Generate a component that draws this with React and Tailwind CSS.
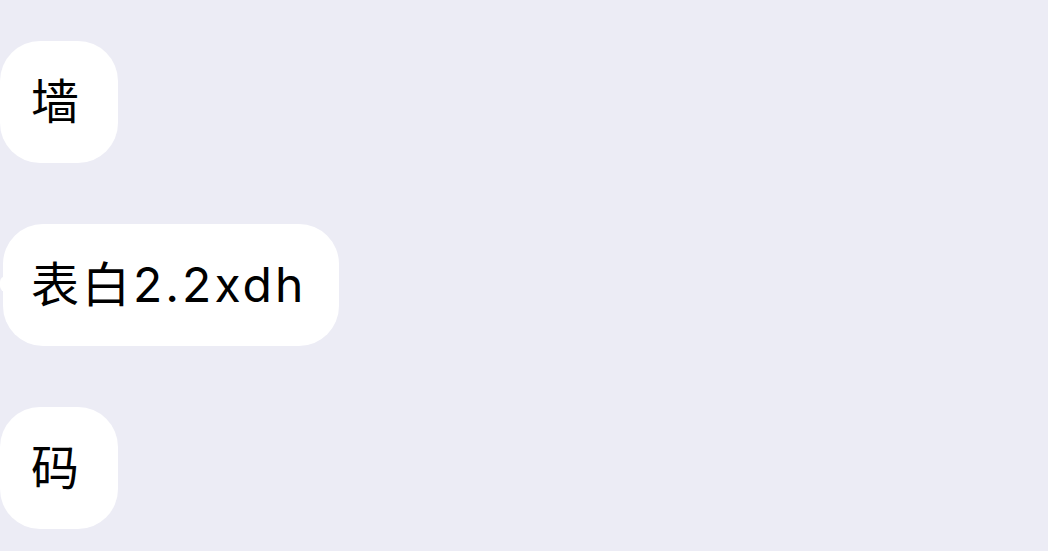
export default function App() {
  const font = { fontFamily: 'Inter, "Noto Sans CJK SC", sans-serif' };
  return (
    <div className="w-[1048px] h-[551px] bg-[#ececf5] overflow-hidden pt-[41px] flex flex-col items-start gap-[61px]" style={font}>
      <div className="h-[122px] rounded-[40px] bg-white pl-[31px] pr-[39px] flex items-center text-[48px] text-black leading-none">
        墙
      </div>
      <div className="relative ml-[3px] h-[122px] rounded-[40px] bg-white pl-[28px] pr-[33px] flex items-center text-[48px] text-black leading-none tracking-[3px]">
        <span className="absolute left-[-3px] top-[52px] w-[6px] h-[16px] bg-white rounded-l-full"></span>
        表白2.2xdh
      </div>
      <div className="h-[122px] rounded-[40px] bg-white pl-[31px] pr-[39px] flex items-center text-[48px] text-black leading-none">
        码
      </div>
    </div>
  );
}
